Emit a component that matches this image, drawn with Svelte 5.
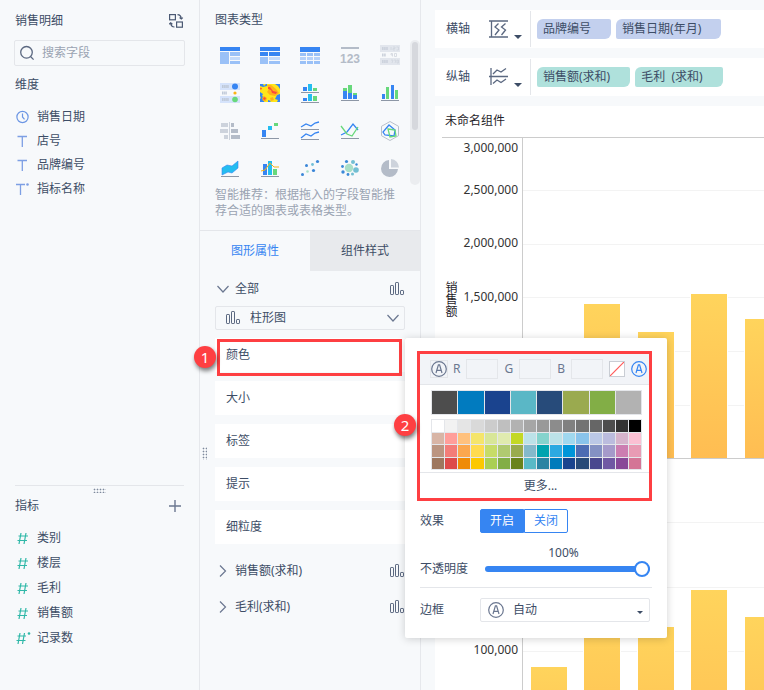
<script lang="ts">
  interface Field {
    name: string;
    icon: string;
  }

  interface Bar {
    x: number;
    y: number;
  }

  const dimensions: Field[] = [
    { name: '销售日期', icon: 'date' },
    { name: '店号', icon: 'text' },
    { name: '品牌编号', icon: 'text' },
    { name: '指标名称', icon: 'text-star' }
  ];

  const measures: Field[] = [
    { name: '类别', icon: 'num' },
    { name: '楼层', icon: 'num' },
    { name: '毛利', icon: 'num' },
    { name: '销售额', icon: 'num' },
    { name: '记录数', icon: 'num-star' }
  ];

  const themeColors = ['#4d4d4d', '#017bbf', '#1a438e', '#5ab7c6', '#274b7a', '#9aaa4f', '#82ae46', '#b2b2b2'];

  const palette = [
    '#ffffff', '#f2f2f2', '#e5e5e5', '#d9d9d9', '#cccccc', '#bfbfbf', '#b2b2b2', '#a6a6a6',
    '#999999', '#8c8c8c', '#808080', '#737373', '#666666', '#4d4d4d', '#333333', '#000000',
    '#d8b5a6', '#ff9e9a', '#ffc17d', '#f5e56b', '#d8e698', '#e0ebaf', '#c3d825', '#bce2e8',
    '#85d3cd', '#bce2e8', '#a0d8ef', '#89c3eb', '#bbc8e6', '#bbbcde', '#d6b4cc', '#fbc0d3',
    '#bb9581', '#f37d79', '#fba74f', '#ffdb4f', '#c7dc68', '#b0ca71', '#99ab4e', '#84b9cb',
    '#00a3af', '#2ca9e1', '#0095d9', '#4c6cb3', '#8491c3', '#a59aca', '#cc7eb1', '#e89bb4',
    '#9d775f', '#dd4b4b', '#ef8b07', '#fcc800', '#aacf53', '#82ae46', '#69821b', '#59b9c6',
    '#2a83a2', '#007bbb', '#19448e', '#274a78', '#4a488e', '#7058a3', '#884898', '#d47596'
  ];

  const upperBars: Bar[] = [
    { x: 122, y: 166 }, { x: 176, y: 194 }, { x: 229, y: 156 }, { x: 283, y: 181 },
    { x: 336, y: 172 }, { x: 390, y: 203 }, { x: 444, y: 160 }, { x: 497, y: 190 }
  ];
  const lowerBars: Bar[] = [
    { x: 69, y: 529 }, { x: 122, y: 470 }, { x: 176, y: 489 }, { x: 229, y: 452 }, { x: 283, y: 479 },
    { x: 336, y: 468 }, { x: 390, y: 491 }, { x: 444, y: 460 }, { x: 497, y: 483 }
  ];
  const gridLines = [52, 106, 159, 213, 267, 384, 449, 513];
  const ticks = [
    { label: '3,000,000', y: 14 },
    { label: '2,500,000', y: 56 },
    { label: '2,000,000', y: 109 },
    { label: '1,500,000', y: 163 },
    { label: '100,000', y: 516 }
  ];
  const upperBase = 320;
  const lowerBase = 641;

  let tab = $state('图形属性');
  let effect = $state(true);
  let opacity = $state(100);
</script>

{#snippet barIcon()}
  <svg class="bar-icon" width="16" height="16" viewBox="0 0 16 16" fill="none" stroke="#5b6880">
    <rect x="1.5" y="4.5" width="3" height="9" rx="0.6" />
    <rect x="6.5" y="1.5" width="3" height="12" rx="0.6" />
    <rect x="11.5" y="9.5" width="3" height="4" rx="0.6" />
  </svg>
{/snippet}

{#snippet autoIcon(color: string)}
  <svg width="16" height="16" viewBox="0 0 16 16" fill="none" stroke={color} stroke-width="1.2">
    <circle cx="8" cy="8" r="7.3" />
    <path d="M5 12 L7.4 3.8 H8.6 L11 12 M5.9 9.4 H10.1" stroke-width="1.2" />
  </svg>
{/snippet}

{#snippet fieldIcon(icon: string)}
  <svg width="16" height="16" viewBox="0 0 16 16" fill="none">
    {#if icon === 'date'}
      <circle cx="7.5" cy="8" r="5.6" stroke="#6c96e4" stroke-width="1.2" />
      <path d="M7.500 4.500 V8 L9.500 10.300" stroke="#6c96e4" stroke-width="1.2" />
    {:else if icon.startsWith('text')}
      <path d={icon === 'text' ? 'M2.5 3.5 H12 M7.3 3.5 V14' : 'M1 3.5 H10 M5.5 3.5 V14'} stroke="#7d9fe4" stroke-width="1.3" />
    {:else if icon === 'num'}
      <path d="M6 3 L4 14 M11 3 L9 14 M3.5 6 H13 M2.5 10.5 H12" stroke="#2fb8a8" stroke-width="1.2" />
    {:else}
      <path d="M5 3 L3 14 M9.500 3 L7.500 14 M2.500 6 H11 M1.500 10.500 H10.500" stroke="#2fb8a8" stroke-width="1.2" />
    {/if}
    {#if icon.endsWith('star')}
      <circle cx={icon === 'num-star' ? 14 : 12.5} cy="3.500" r="1.300" fill={icon === 'num-star' ? '#2fb8a8' : '#7d9fe4'} />
    {/if}
  </svg>
{/snippet}

<div class="app">
  <aside class="fields">
    <section class="dims">
      <header class="fields-head">
        <span>销售明细</span>
        <button class="icon-btn" aria-label="切换">
          <svg width="16" height="16" viewBox="0 0 16 16" fill="none" stroke="#4c5a74" stroke-width="1.2">
            <rect x="0.600" y="1.600" width="5.800" height="5.200" />
            <rect x="7.600" y="9" width="5.800" height="5.200" />
            <path d="M8.500 1.600 Q12 1.800 12.200 5.500 M10.500 4.600 L12.300 6 L13.800 4.600 M5.500 14 Q2 13.800 1.800 10.500 M0.200 11.200 L1.700 9.800 L3.400 11.200" />
          </svg>
        </button>
      </header>
      <label class="search">
        <svg width="16" height="16" viewBox="0 0 16 16" fill="none" stroke="#5b6880" stroke-width="1.3">
          <circle cx="6.500" cy="7.300" r="5.800" />
          <path d="M10.500 11.500 L13.600 14.600" />
        </svg>
        <input type="text" placeholder="搜索字段" aria-label="搜索字段" />
      </label>
      <h2 class="group-title">维度</h2>
      <ul class="field-list">
        {#each dimensions as field}
          <li>{@render fieldIcon(field.icon)}<span>{field.name}</span></li>
        {/each}
      </ul>
    </section>
    <section class="measures">
      <i class="grip"></i>
      <header class="measures-head">
        <h2 class="group-title">指标</h2>
        <button class="icon-btn" aria-label="添加">
          <svg width="16" height="16" viewBox="0 0 16 16" stroke="#6b7790" stroke-width="1.4"><path d="M7 2 V14 M1 8 H13" /></svg>
        </button>
      </header>
      <ul class="field-list measure-list">
        {#each measures as field}
          <li>{@render fieldIcon(field.icon)}<span>{field.name}</span></li>
        {/each}
      </ul>
    </section>
  </aside>

  <aside class="config">
    <i class="grip side-grip"></i>
    <h2 class="config-title">图表类型</h2>
    <div class="types">
      <div class="type-grid">
        <button aria-label="分组表">
          <svg viewBox="0 0 20 20">
            <path fill="#3685f2" d="M0 2h20v4H0z" /><path fill="#9ac1f7" d="M0 7h9v12H0zM10 7h10v4H10zM10 16h10v3H10z" /><path fill="#c3dafa" d="M10 12h10v3H10z" />
          </svg>
        </button>
        <button aria-label="交叉表">
          <svg viewBox="0 0 20 20">
            <path fill="#3685f2" d="M0 2h20v4H0zM0 7h8v4H0zM9 7h11v4H9z" /><path fill="#9ac1f7" d="M0 12h8v7H0zM9 16h11v3H9z" /><path fill="#c3dafa" d="M9 12h11v3H9z" />
          </svg>
        </button>
        <button aria-label="明细表">
          <svg viewBox="0 0 20 20">
            <path fill="#3685f2" d="M0 2h20v5H0z" /><path fill="#9ac1f7" d="M0 8h6v3H0zM7 8h6v3H7zM14 8h6v3h-6zM0 16h6v3H0zM7 16h6v3H7zM14 16h6v3h-6z" /><path fill="#b5d1f9" d="M0 12h6v3H0zM7 12h6v3H7zM14 12h6v3h-6z" />
          </svg>
        </button>
        <button aria-label="指标卡">
          <svg viewBox="0 0 20 20">
            <path fill="#b4bcc8" d="M1 2h18v2H1z" />
            <text class="kpi" x="10" y="18" text-anchor="middle">123</text>
          </svg>
        </button>
        <button aria-label="KPI 表">
          <svg viewBox="0 0 20 20">
            <path fill="#e2e6ed" d="M0 0h20v7H0zM0 13h20v7H0z" />
            <path stroke="#ccd2dc" stroke-width="3" stroke-dasharray="1.600 .5" d="M2 3.500h6M2 10h4M2 16.500h6" />
            <path stroke="#d0d5de" fill="none" stroke-width=".8" d="M11 2v3M13 2h2v1.500h-2V5h2M16.500 2h2v3h-2M11 8.500h1.500v3M11 8.500v1.500h1.500M14.500 8.500h2v3h-2zM11 15h2l-1 3M14 15h2l-1 3M17 15h1.500v3H17z" />
          </svg>
        </button>

        <button aria-label="颜色表格">
          <svg viewBox="0 0 20 20">
            <path fill="#d5e3fb" d="M0 0h20v7H0zM0 13h20v7H0z" />
            <path stroke="#bfc9d8" stroke-width="3" stroke-dasharray="1.600 .5" d="M2 3.500h7M2 10h5M2 16.500h7" />
            <circle cx="15" cy="3.500" r="3" fill="#3685f2" /><circle cx="15" cy="10" r="1.600" fill="#fbb416" /><circle cx="15" cy="16.500" r="2.800" fill="#67d87b" />
          </svg>
        </button>
        <button aria-label="热力图">
          <svg viewBox="0 0 20 20">
            <path fill="#ffe51a" d="M0 1h20v18H0z" />
            <path fill="#3685f2" d="M0 1h3l1 2 2-2h1v2L3 4 0 3zM15 1h5v5l-2-3zM0 9l3 2-1 2 3 2-1 4H0v-3l1-1-1-2zM17 12l3-1v8h-3l1-2-3-1zM8 17l3 1-1 1H8z" />
            <path fill="#ffb01c" d="M7 2h4l5 4 3 4-4 3-5-1-3-3 2-3zM2 15l2-2 3 2-1 3H3zM10 15l3-1 1 3-3 1zM0 4l2 1-2 2z" />
            <path fill="#fc4b3b" d="M8 4h2l3 4 4 1-1 2-4-1-1-3-3-1zM3 16l1-2 2 1-1 2zM0 5l2 0-1 2z" />
          </svg>
        </button>
        <button aria-label="多系列柱形图">
          <svg viewBox="0 0 20 20">
            <path fill="#3685f2" d="M3 4h4v4H3zM3 15h4v3H3z" /><path fill="#24bdf0" d="M8 1h4v7H8zM8 11h4v7H8z" /><path fill="#67d87b" d="M13 5h4v3h-4zM13 13h4v5h-4z" /><path fill="#8d97a6" d="M1 9h18v1H1zM1 19h18v1H1z" />
          </svg>
        </button>
        <button aria-label="堆积柱形图">
          <svg viewBox="0 0 20 20">
            <path fill="#67d87b" d="M3 5h4v3H3zM8 2h4v8H8zM13 10h4v2h-4z" /><path fill="#3685f2" d="M3 8h4v8H3zM8 10h4v6H8zM13 12h4v4h-4z" /><path fill="#8d97a6" d="M1 17h18v1H1z" />
          </svg>
        </button>
        <button aria-label="对比柱形图">
          <svg viewBox="0 0 20 20">
            <path fill="#3685f2" d="M2 11h3v5H2zM11 2h3v14h-3z" /><path fill="#67d87b" d="M6 4h3v12H6zM15 7h3v9h-3z" /><path fill="#8d97a6" d="M1 17h18v1H1z" />
          </svg>
        </button>

        <button aria-label="对比条形图">
          <svg viewBox="0 0 20 20">
            <path fill="#cdd3dc" d="M1 2h7v4H1zM0 8h8v4H0zM4 14h4v4H4zM9 1h1v18H9z" /><path fill="#b4bcc8" d="M11 2h3v4h-3zM11 8h7v4h-7zM11 14h9v4h-9z" />
          </svg>
        </button>
        <button aria-label="瀑布图">
          <svg viewBox="0 0 20 20">
            <path fill="#3685f2" d="M2 9h4v7H2z" /><path fill="#24bdf0" d="M8 5h4v4H8z" /><path fill="#67d87b" d="M14 2h4v3h-4z" /><path fill="#8d97a6" d="M1 17h18v1H1z" />
          </svg>
        </button>
        <button aria-label="多系列折线图">
          <svg viewBox="0 0 20 20" fill="none">
            <path stroke="#3685f2" stroke-width="1.300" d="M1 6l5-3 5 2 4-3 4-1M1 17l5-4 5 2 4-3 4-1" /><path fill="#8d97a6" d="M1 8h18v1H1zM1 18h18v1H1z" />
          </svg>
        </button>
        <button aria-label="折线图">
          <svg viewBox="0 0 20 20" fill="none">
            <path stroke="#3685f2" stroke-width="1.300" d="M1 14l6-3 6-8 5 6" /><path stroke="#67d87b" stroke-width="1.300" d="M1 5l6 8 5 2 6-9" /><path fill="#8d97a6" d="M1 17h18v1H1z" />
          </svg>
        </button>
        <button aria-label="雷达图">
          <svg viewBox="0 0 20 20" fill="none">
            <path stroke="#b8bfca" d="M10 0.500l8.500 4.800v9.400L10 19.500l-8.500-4.800V5.300z" /><path stroke="#3685f2" stroke-width="1.300" d="M9 4l6 5-1 6-9-1-2-3z" /><path stroke="#67d87b" stroke-width="1.300" d="M8 8l7 1 1 6-6 1z" />
          </svg>
        </button>

        <button aria-label="面积图">
          <svg viewBox="0 0 20 20">
            <path fill="#24bdf0" stroke="#3685f2" stroke-width=".6" d="M2 9l5-3 5 1 6-5v7l-6 5-4-1-6 3z" /><path fill="#8d97a6" d="M1 17h18v1H1z" />
          </svg>
        </button>
        <button aria-label="组合图">
          <svg viewBox="0 0 20 20">
            <path fill="#3685f2" d="M3 5h4v11H3z" /><path fill="#24bdf0" d="M8 2h4v14H8z" /><path fill="#67d87b" d="M13 10h4v6h-4z" /><path fill="none" stroke="#fbb416" d="M1 12l4-1 5-7 4 4 5 0" /><path fill="#8d97a6" d="M1 17h18v1H1z" />
          </svg>
        </button>
        <button aria-label="散点图">
          <svg viewBox="0 0 20 20">
            <g fill="#3a86d8"><circle cx="17.500" cy="2.500" r="1.600" /><circle cx="6.500" cy="6.500" r="1.500" /><circle cx="13.500" cy="11.500" r="1.600" /><circle cx="2.500" cy="15.500" r="1.500" /></g>
            <circle cx="12.500" cy="5.500" r="1.400" fill="#72c0d8" /><circle cx="7.500" cy="12.500" r="1.300" fill="#a9dfc8" />
          </svg>
        </button>
        <button aria-label="聚合气泡图">
          <svg viewBox="0 0 20 20">
            <circle cx="9" cy="9" r="4.200" fill="#a9dfc8" />
            <g fill="#72bfd3"><circle cx="13" cy="3" r="2" /><circle cx="16" cy="11" r="2.800" /><circle cx="12.500" cy="15" r="1.500" /></g>
            <g fill="#3a8ad8"><circle cx="6.500" cy="2.500" r="1.600" /><circle cx="2.500" cy="7.500" r="1.400" /><circle cx="3" cy="13" r="1.700" /><circle cx="8" cy="15.500" r="1.400" /><circle cx="16.500" cy="5.500" r="1.200" /></g>
          </svg>
        </button>
        <button aria-label="饼图">
          <svg viewBox="0 0 20 20">
            <path fill="#b4bcc8" d="M9 1a8.500 8.500 0 1 0 9 9H9z" /><path fill="#cdd3dc" d="M11 0v8.500h8A8.500 8.500 0 0 0 11 0z" />
          </svg>
        </button>
      </div>
      <div class="scroll"><i></i></div>
    </div>
    <p class="hint">智能推荐：根据拖入的字段智能推荐合适的图表或表格类型。</p>

    <div class="tabs">
      {#each ['图形属性', '组件样式'] as name}
        <button class:active={tab === name} onclick={() => (tab = name)}>{name}</button>
      {/each}
    </div>

    <div class="props">
      <div class="prop-row">
        <svg width="14" height="14" viewBox="0 0 14 14" fill="none" stroke="#6b7790" stroke-width="1.200"><path d="M2.500 4 L8 10 L13.500 4" /></svg>
        <span>全部</span>
        {@render barIcon()}
      </div>
      <div class="shape">
        {@render barIcon()}
        <select aria-label="图形">
          <option>柱形图</option>
        </select>
        <svg class="arrow" width="14" height="14" viewBox="0 0 14 14" fill="none" stroke="#6b7790" stroke-width="1.200"><path d="M1.500 4 L7 10 L12.500 4" /></svg>
      </div>

      <div class="cards">
        <div class="color-item">
          <button class="card">颜色</button>
          <div class="mark"><b class="badge">1</b></div>

          <div class="popup">
            <div class="picker">
              <b class="badge">2</b>
              <div class="rgb">
                <span class="auto-box">{@render autoIcon('#6b7790')}</span>
                {#each ['R', 'G', 'B'] as channel}
                  <label>{channel}<input type="text" /></label>
                {/each}
                <button class="none" aria-label="透明">
                  <svg width="16" height="16" viewBox="0 0 16 16"><path d="M1 15L15 1" stroke="#ff5a5a" stroke-width="1.200" /></svg>
                </button>
                <button class="icon-btn" aria-label="自动">{@render autoIcon('#3685f2')}</button>
              </div>
              <div class="theme">
                {#each themeColors as color}
                  <button aria-label={color} style="background: {color}"></button>
                {/each}
              </div>
              <div class="palette">
                {#each palette as color}
                  <button aria-label={color} style="background: {color}"></button>
                {/each}
              </div>
              <button class="more">更多...</button>
            </div>

            <div class="setting">
              <span>效果</span>
              <div class="switch">
                <button class:on={effect} onclick={() => (effect = true)}>开启</button>
                <button class:on={!effect} onclick={() => (effect = false)}>关闭</button>
              </div>
            </div>
            <div class="setting opacity">
              <label for="opacity">不透明度</label>
              <div class="slider">
                <output for="opacity">{opacity}%</output>
                <input id="opacity" type="range" min="0" max="100" bind:value={opacity} />
              </div>
            </div>
            <div class="setting border-row">
              <label for="border">边框</label>
              <div class="border-select">
                {@render autoIcon('#6b7790')}
                <select id="border">
                  <option>自动</option>
                </select>
                <i class="caret"></i>
              </div>
            </div>
          </div>
        </div>
        {#each ['大小', '标签', '提示', '细粒度'] as name}
          <button class="card">{name}</button>
        {/each}
      </div>

      {#each ['销售额(求和)', '毛利(求和)'] as name}
        <div class="prop-row measure-row">
          <svg width="14" height="14" viewBox="0 0 14 14" fill="none" stroke="#6b7790" stroke-width="1.200"><path d="M5 1.500 L10.500 7 L5 12.500" /></svg>
          <span>{name}</span>
          {@render barIcon()}
        </div>
      {/each}
    </div>
  </aside>

  <main>
    <div class="axis">
      <span>横轴</span>
      <button class="axis-btn" aria-label="横轴">
        <svg width="20" height="20" viewBox="0 0 20 20" fill="none" stroke="#5b6880" stroke-width="1.300">
          <path d="M0 2H19M0 18H19M2.500 2V18M9.500 4.500L6 8L10 11L6 16M16.500 4.500L12.500 8L16.500 11L12.500 16" />
        </svg>
        <i class="caret"></i>
      </button>
      <div class="chips">
        <span class="chip">品牌编号</span>
        <span class="chip">销售日期(年月)</span>
      </div>
    </div>
    <div class="axis">
      <span>纵轴</span>
      <button class="axis-btn" aria-label="纵轴">
        <svg width="20" height="20" viewBox="0 0 20 20" fill="none" stroke="#5b6880" stroke-width="1.300">
          <path d="M2 1V18M0 9.500H19M4 7L8 3L12 5L17 1.500M4 16.500L8 13L12 15.500L17 12" />
        </svg>
        <i class="caret"></i>
      </button>
      <div class="chips">
        <span class="chip green">销售额(求和)</span>
        <span class="chip green">毛利&nbsp;&nbsp;(求和)</span>
      </div>
    </div>

    <section class="component">
      <h1>未命名组件</h1>
      <div class="chart">
        <span class="axis-name">销售额</span>
        <svg class="plot" width="100%" height="552">
          <defs>
            <linearGradient id="bar" x1="0" y1="0" x2="0" y2="1">
              <stop offset="0" stop-color="#ffd45c" />
              <stop offset="1" stop-color="#ffbd52" />
            </linearGradient>
          </defs>
          {#each gridLines as y}
            <rect class="grid" x="61" {y} width="100%" height="1" />
          {/each}
          {#each upperBars as bar}
            <rect class="gap" x={bar.x - 1} y={bar.y} width="38" height={upperBase - bar.y} />
            <rect fill="url(#bar)" x={bar.x} y={bar.y} width="36" height={upperBase - bar.y} />
          {/each}
          {#each lowerBars as bar}
            <rect class="gap" x={bar.x - 1} y={bar.y} width="38" height={lowerBase - bar.y} />
            <rect fill="url(#bar)" x={bar.x} y={bar.y} width="36" height={lowerBase - bar.y} />
          {/each}
          <rect class="line" x="60" y="0" width="1" height="100%" />
          <rect class="line" x="0" y={upperBase} width="100%" height="1" />
          {#each ticks as tick}
            <text x="56" y={tick.y} text-anchor="end">{tick.label}</text>
          {/each}
        </svg>
      </div>
    </section>
  </main>
</div>

<style>
  :global(body) {
    background: #f7f9fb;
  }

  .app {
    display: grid;
    grid-template-columns: 200px 221px minmax(0, 1fr);
    min-height: 100vh;
    overflow: hidden;
    font: 12px/16px "Noto Sans", "Noto Sans CJK SC", sans-serif;
    color: #3d4d66;
    background: #f7f9fb;
  }

  .app :is(svg, i) {
    flex: none;
  }

  .app svg {
    display: block;
  }

  h1,
  h2,
  p,
  ul {
    margin: 0;
    padding: 0;
    font-size: 12px;
    font-weight: 400;
    list-style: none;
  }

  button,
  input,
  select {
    box-sizing: border-box;
    margin: 0;
    padding: 0;
    border: 0;
    border-radius: 0;
    background: none;
    font: inherit;
    color: inherit;
    appearance: none;
  }

  button {
    cursor: pointer;
  }

  /* fields */
  .fields {
    display: flex;
    flex-direction: column;
    border-right: 1px solid #e6e8ec;
  }

  .dims {
    flex: 1;
    padding: 13px 14px 0;
  }

  .fields-head,
  .measures-head {
    display: flex;
    align-items: center;
    justify-content: space-between;
    padding-left: 1px;
  }

  .search {
    display: flex;
    align-items: center;
    gap: 6px;
    height: 24px;
    margin-top: 11px;
    padding: 0 5px;
    border: 1px solid #e4e6ea;
    border-radius: 2px;
  }

  .search input {
    flex: 1;
    min-width: 0;
    outline: none;
  }

  .search input::placeholder {
    color: #9aa3b2;
    opacity: 1;
  }

  .dims .group-title {
    margin: 11px 0 12px;
    padding-left: 1px;
  }

  .field-list li {
    display: flex;
    align-items: center;
    gap: 6px;
    height: 24px;
    padding-left: 1px;
  }

  .measures {
    display: flow-root;
    position: relative;
    height: 204px;
    margin: 0 15px;
    border-top: 1px solid #e4e6ea;
  }

  .measures-head {
    margin: 12px 0 11px;
    padding: 0;
  }

  .measure-list li {
    height: 25px;
    padding: 0;
  }

  .grip {
    position: absolute;
    top: 2px;
    left: 78px;
    width: 13px;
    height: 5px;
    background: radial-gradient(circle, #7e899c 40%, transparent 50%) 0 0 / 3px 3px;
  }

  .side-grip {
    top: 447px;
    left: 2px;
    width: 5px;
    height: 13px;
  }

  /* config */
  .config {
    position: relative;
    z-index: 1;
    border-right: 1px solid #e6e8ec;
  }

  .config-title {
    padding: 12px 15px 8px;
  }

  .types {
    display: flex;
  }

  .type-grid {
    display: grid;
    grid-template-columns: repeat(5, 1fr);
    flex: 1;
    padding-left: 10px;
  }

  .type-grid button {
    display: grid;
    place-items: center;
    height: 38px;
  }

  .type-grid svg {
    width: 20px;
    height: 20px;
  }

  .kpi {
    font: 700 12px "Liberation Sans Narrow", "Open Sans Condensed", "DejaVu Sans Condensed", "Liberation Sans", sans-serif;
    font-family: "Liberation Sans Narrow", "Liberation Sans", sans-serif;
    fill: #b4bcc8;
  }

  .scroll {
    width: 10px;
    height: 145px;
    margin-top: 4px;
    border-radius: 5px;
    background: #ebedf0;
  }

  .scroll i {
    display: block;
    width: 6px;
    height: 88px;
    margin: 2px;
    border-radius: 3px;
    background: #d6d8dd;
  }

  .hint {
    height: 43px;
    margin-top: -1px;
    padding: 0 15px;
    color: #9aa3b2;
  }

  .tabs {
    display: grid;
    grid-template-columns: 1fr 1fr;
    height: 40px;
    border-top: 1px solid #e4e6ea;
  }

  .tabs button {
    background: #e8eaed;
  }

  .tabs .active {
    color: #3685f2;
    background: none;
  }

  .props {
    padding: 9px 15px 0;
  }

  .prop-row {
    display: flex;
    align-items: center;
    gap: 6px;
    height: 18px;
    color: #3d4d66;
  }

  .prop-row span {
    flex: 1;
  }

  .measure-row {
    height: 36px;
  }

  .shape {
    position: relative;
    margin-top: 8px;
  }

  .shape select {
    display: block;
    width: 100%;
    height: 24px;
    padding: 0 34px;
    border: 1px solid #e4e6ea;
    border-radius: 2px;
  }

  .shape :global(.bar-icon) {
    position: absolute;
    top: 4px;
    left: 10px;
  }

  .shape .arrow {
    position: absolute;
    top: 5px;
    right: 5px;
  }

  .cards {
    display: grid;
    gap: 9px;
    margin: 8px 0 9px;
  }

  .card {
    display: block;
    width: 100%;
    height: 34px;
    padding: 0 11px;
    background: #fff;
    text-align: left;
  }

  .color-item {
    position: relative;
  }

  .mark {
    position: absolute;
    inset: 1px 3px -4px 2px;
    border: 3px solid #fe3f42;
    pointer-events: none;
  }

  .badge {
    position: absolute;
    top: 50%;
    left: -26px;
    width: 22px;
    height: 22px;
    margin-top: -12px;
    border-radius: 50%;
    background: #fe3f42;
    box-shadow: 1px 3px 4px rgba(0, 0, 0, 0.5);
    color: #fff;
    font-size: 15px;
    font-weight: 400;
    line-height: 22px;
    text-align: center;
  }

  /* color popup */
  .popup {
    position: absolute;
    top: 0;
    left: 190px;
    box-sizing: border-box;
    width: 262px;
    padding: 13px 15px 16px 12px;
    border-radius: 2px;
    background: #fff;
    box-shadow: 0 1px 8px rgba(0, 0, 0, 0.18);
  }

  .picker {
    position: relative;
    border: 3px solid #fe3f42;
  }

  .rgb {
    display: flex;
    align-items: center;
    justify-content: space-between;
    height: 30px;
    padding: 0 2px 0 11px;
    border-bottom: 1px solid #e4e6ea;
    background: #f2f4f8;
    color: #6b7790;
  }

  .auto-box {
    outline: 1px solid #e4e6ea;
  }

  .rgb label {
    display: flex;
    align-items: center;
    gap: 6px;
  }

  .rgb input {
    width: 32px;
    height: 20px;
    border: 1px solid #e4e6ea;
  }

  .none {
    width: 16px;
    height: 16px;
    border: 1px solid #c9cdd4;
    background: #fff;
    overflow: hidden;
  }

  .none svg {
    margin: -1px;
  }

  .theme,
  .palette {
    display: grid;
    gap: 1px;
    margin: 5px 7px 0 11px;
    padding: 1px;
    background: #e4e6ea;
  }

  .theme {
    grid-template-columns: repeat(8, 1fr);
    grid-auto-rows: 23px;
  }

  .palette {
    grid-template-columns: repeat(16, 1fr);
    grid-template-rows: 12px 11px 12px 11px;
    margin-top: 4px;
  }

  .more {
    display: block;
    width: 100%;
    height: 26px;
    margin-top: 2px;
    padding-left: 12px;
    border-top: 1px solid #e4e6ea;
  }

  .setting {
    display: flex;
    align-items: center;
    margin-left: 3px;
  }

  .setting > :first-child {
    width: 60px;
  }

  .switch {
    display: flex;
    margin: 8px 0;
  }

  .switch button {
    width: 44px;
    height: 24px;
    border: 1px solid #3685f2;
    color: #3685f2;
  }

  .switch button:first-child {
    border-radius: 2px 0 0 2px;
  }

  .switch button:last-child {
    border-radius: 0 2px 2px 0;
  }

  .switch .on {
    background: #3685f2;
    color: #fff;
  }

  .opacity {
    align-items: flex-end;
    height: 47px;
    padding-bottom: 10px;
    box-sizing: border-box;
    border-bottom: 1px solid #e4e6ea;
  }

  .slider {
    flex: 1;
    display: grid;
    margin: 0 2px 0 5px;
  }

  .slider output {
    text-align: center;
    margin-right: 8px;
  }

  .slider input {
    width: 100%;
    height: 16px;
  }

  .slider input::-webkit-slider-runnable-track {
    height: 6px;
    border-radius: 3px;
    background: #3685f2;
  }

  .slider input::-webkit-slider-thumb {
    box-sizing: border-box;
    width: 16px;
    height: 16px;
    margin-top: -5px;
    border: 2px solid #3685f2;
    border-radius: 50%;
    background: #fff;
    appearance: none;
  }

  .border-row {
    padding-top: 10px;
  }

  .border-select {
    position: relative;
    flex: 1;
    margin-right: 2px;
  }

  .border-select select {
    display: block;
    width: 100%;
    height: 24px;
    padding: 0 32px;
    border: 1px solid #e4e6ea;
    border-radius: 2px;
  }

  .border-select :global(svg) {
    position: absolute;
    top: 4px;
    left: 8px;
  }

  .caret {
    border: 3px solid transparent;
    border-top-color: #3d4d66;
    border-bottom: 0;
  }

  .border-select .caret {
    position: absolute;
    top: 13px;
    right: 7px;
  }

  /* chart area */
  main {
    display: flex;
    flex-direction: column;
    gap: 10px;
    min-width: 0;
    padding: 10px 0 0 14px;
  }

  .axis {
    display: flex;
    align-items: center;
    height: 38px;
    padding-left: 11px;
    background: #fff;
  }

  .axis-btn {
    display: flex;
    align-items: flex-end;
    gap: 5px;
    margin-left: 19px;
  }

  .axis-btn .caret {
    border-width: 4px 4px 0;
  }

  .chips {
    display: flex;
    align-items: center;
    gap: 5px;
    height: 36px;
    margin-left: 8px;
    padding-left: 6px;
    border-left: 1px solid #e4e6ea;
  }

  .chip {
    padding: 2px 20px 2px 6px;
    border-radius: 6px 2px;
    background: #c3d0ee;
    white-space: nowrap;
  }

  .green {
    background: #afe1dc;
  }

  .component {
    flex: 1;
    background: #fff;
    color: #1f2329;
  }

  h1 {
    padding: 7px 10px 8px;
  }

  .chart {
    display: flex;
    margin-left: 7px;
    border-top: 1px solid #ccc;
  }

  .axis-name {
    width: 20px;
    height: 322px;
    line-height: 18px;
    writing-mode: vertical-rl;
    text-align: center;
    direction: ltr;
    box-sizing: border-box;
    padding-right: 3px;
  }

  .app .plot {
    flex: 1;
    min-width: 0;
  }

  .plot text {
    fill: #333;
  }

  .grid {
    fill: #f3f3f3;
  }

  .gap {
    fill: #fff;
  }

  .line {
    fill: #ccc;
  }
</style>
